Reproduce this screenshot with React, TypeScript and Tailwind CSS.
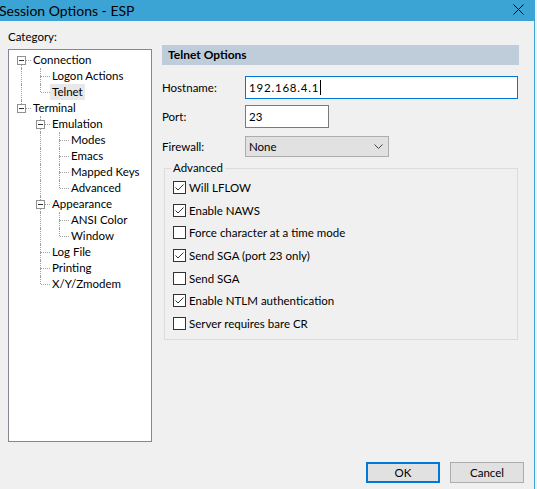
import React from 'react';

type Node = { label: string; children?: Node[]; selected?: boolean };

const tree: Node[] = [
  {
    label: 'Connection',
    children: [{ label: 'Logon Actions' }, { label: 'Telnet', selected: true }],
  },
  {
    label: 'Terminal',
    children: [
      {
        label: 'Emulation',
        children: [{ label: 'Modes' }, { label: 'Emacs' }, { label: 'Mapped Keys' }, { label: 'Advanced' }],
      },
      { label: 'Appearance', children: [{ label: 'ANSI Color' }, { label: 'Window' }] },
      { label: 'Log File' },
      { label: 'Printing' },
      { label: 'X/Y/Zmodem' },
    ],
  },
];

type Row = { node: Node; level: number; first: boolean; last: boolean; trail: boolean[] };

function flatten(nodes: Node[], level: number, trail: boolean[], out: Row[]) {
  nodes.forEach((node, i) => {
    const last = i === nodes.length - 1;
    out.push({ node, level, first: level === 0 && i === 0, last, trail });
    if (node.children) flatten(node.children, level + 1, [...trail, !last], out);
  });
  return out;
}

const rows = flatten(tree, 0, [], []);

const options = [
  { label: 'Will LFLOW', checked: true },
  { label: 'Enable NAWS', checked: true },
  { label: 'Force character at a time mode', checked: false },
  { label: 'Send SGA (port 23 only)', checked: true },
  { label: 'Send SGA', checked: false },
  { label: 'Enable NTLM authentication', checked: true },
  { label: 'Server requires bare CR', checked: false },
];

export default function App() {
  return (
    <div className="w-[537px] h-[489px] bg-[#f0f0f0] flex font-['Lato',sans-serif] text-[11.5px] text-black overflow-hidden">
      <div className="w-[535px] h-full border-r border-[#3ca4d4] flex flex-col">
        {/* Title bar */}
        <div className="h-[21px] bg-[#3ca4d4] flex items-center justify-between">
          <span className="text-[14px] leading-[21px] -ml-[1px] whitespace-nowrap">Session Options - ESP</span>
          <svg width="11" height="11" viewBox="0 0 11 11" className="mr-[10px] mb-[3px]">
            <path d="M0.5 0.5 L10.5 10.5 M10.5 0.5 L0.5 10.5" stroke="#000" strokeWidth="1" />
          </svg>
        </div>

        <div className="flex-1 flex flex-col pl-[8px]">
          <div className="flex">
            {/* Category tree */}
            <div className="w-[144px] pt-[8px]">
              <div className="h-[16px] leading-[16px]">Category:</div>
              <div className="mt-[4px] h-[393px] border border-[#828790] bg-white pt-[2px] pl-[3px]">
                {rows.map((r) => (
                  <TreeRow key={r.node.label} row={r} />
                ))}
              </div>
            </div>

            {/* Telnet options */}
            <div className="ml-[10px] pt-[24px] w-[357px]">
              <div className="h-[20px] bg-[#bfcddb] pl-[6px] font-bold text-[12px] leading-[20px]">Telnet Options</div>

              <div className="flex items-center mt-[11px]">
                <span className="w-[83px]">Hostname:</span>
                <div className="w-[273px] h-[23px] bg-white border border-[#0078d7] pl-[3px] flex items-center">
                  <span className="tracking-[0.8px]">192.168.4.1</span>
                  <span className="w-px h-[15px] bg-black ml-[1px]" />
                </div>
              </div>

              <div className="flex items-center mt-[6px]">
                <span className="w-[83px]">Port:</span>
                <div className="w-[84px] h-[23px] bg-white border border-[#7a7a7a] pl-[3px] flex items-center">23</div>
              </div>

              <div className="flex items-center mt-[8px]">
                <span className="w-[83px]">Firewall:</span>
                <div className="w-[144px] h-[21px] bg-[#e1e1e1] border border-[#adadad] pl-[3px] pr-[5px] flex items-center justify-between">
                  <span>None</span>
                  <svg width="9" height="5" viewBox="0 0 9 5">
                    <path d="M0.5 0.5 L4.5 4.5 L8.5 0.5" fill="none" stroke="#444" strokeWidth="1" />
                  </svg>
                </div>
              </div>

              <div className="relative mt-[11px] ml-[2px] w-[354px] h-[172px] border border-[#dcdcdc] pt-[12px] pl-[8px]">
                <span className="absolute -top-[9px] left-[6px] px-[2px] bg-[#f0f0f0] leading-[16px]">Advanced</span>
                {options.map((o) => (
                  <div key={o.label} className="h-[22.7px] flex items-start">
                    <div className="w-[13px] h-[13px] border border-[#333] bg-white flex items-center justify-center">
                      {o.checked && (
                        <svg width="11" height="11" viewBox="0 0 11 11">
                          <path d="M1.5 5.5 L4 8 L9.5 2.5" fill="none" stroke="#333" strokeWidth="1" />
                        </svg>
                      )}
                    </div>
                    <span className="ml-[3px] leading-[13px]">{o.label}</span>
                  </div>
                ))}
              </div>
            </div>
          </div>

          {/* Buttons */}
          <div className="flex justify-end gap-[10px] mt-[20px] pr-[10px]">
            <button className="w-[74px] h-[21px] bg-[#e1e1e1] border-2 border-[#0078d7] leading-none">OK</button>
            <button className="w-[74px] h-[21px] bg-[#e1e1e1] border border-[#adadad] leading-none">Cancel</button>
          </div>
        </div>
      </div>
    </div>
  );
}

function TreeRow({ row }: { row: Row }) {
  const { node, first, last, trail } = row;
  return (
    <div className="h-[16px] flex items-center">
      {trail.map((cont, i) => (
        <div key={i} className="relative w-[19px] h-[16px] shrink-0">
          {cont && <div className="absolute left-[9px] top-0 bottom-0 border-l border-dotted border-[#a0a0a0]" />}
        </div>
      ))}
      <div className="relative w-[19px] h-[16px] shrink-0">
        {!first && <div className="absolute left-[9px] top-0 h-[8px] border-l border-dotted border-[#a0a0a0]" />}
        {!last && <div className="absolute left-[9px] top-[8px] bottom-0 border-l border-dotted border-[#a0a0a0]" />}
        <div className="absolute left-[10px] right-0 top-[8px] border-t border-dotted border-[#a0a0a0]" />
        {node.children && (
          <div className="absolute left-[5px] top-[4px] w-[9px] h-[9px] border border-[#919191] bg-white flex items-center justify-center">
            <div className="w-[5px] h-px bg-[#333]" />
          </div>
        )}
      </div>
      <span className={`px-[2px] leading-[16px] whitespace-nowrap ${node.selected ? 'bg-[#e8e8e8]' : ''}`}>{node.label}</span>
    </div>
  );
}
